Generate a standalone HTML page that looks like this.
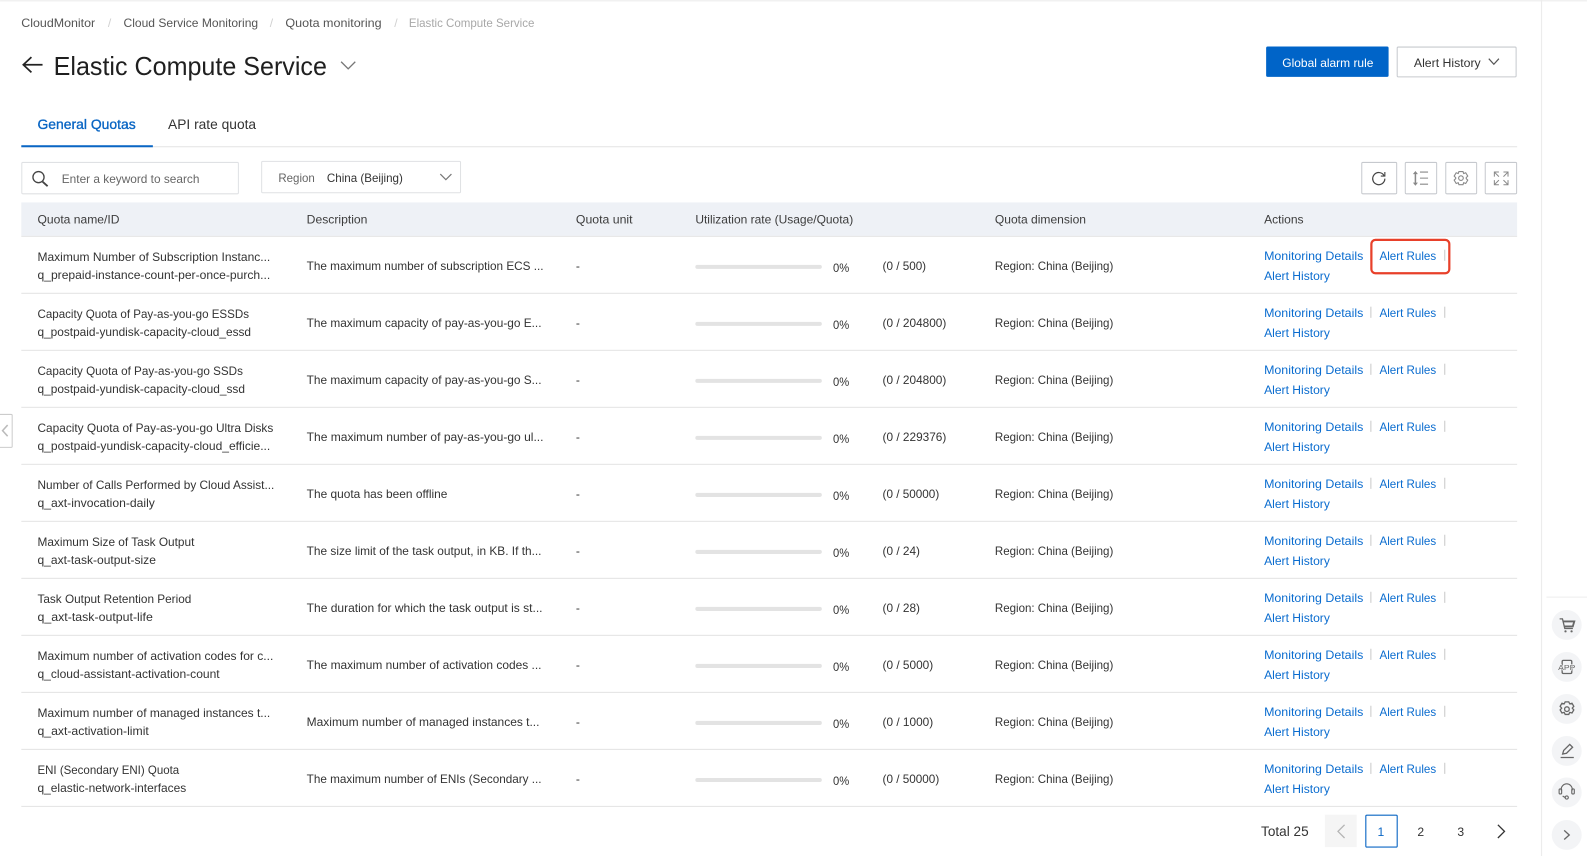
<!DOCTYPE html>
<html lang="en">
<head>
<meta charset="utf-8">
<title>Elastic Compute Service</title>
<style>
html,body{margin:0;padding:0;background:#fff;width:1587px;height:856px;overflow:hidden}
svg{display:block;position:absolute;left:0;top:0;filter:blur(.3px)}
text{font-family:"Liberation Sans",sans-serif;font-size:12px;fill:#333;white-space:pre}
.l{fill:#0a6ccf}
.b{fill:#555}
.h{fill:#3c3c3c}
.bar{fill:#e3e3e3}
.ln{fill:#e3e3e3}
.sep{fill:#c9c9c9}
.ic{fill:none;stroke:#444;stroke-width:1.2}
.ig{fill:none;stroke:#888;stroke-width:1.1}
.si{fill:none;stroke:#666;stroke-width:1.3}
.cir{fill:#f3f4f6}
.box{fill:#fff;stroke:#c6c9ce;stroke-width:1}
</style>
</head>
<body>
<svg width="1587" height="856" viewBox="0 0 1568 845.8" xmlns="http://www.w3.org/2000/svg">
<rect x="0" y="0" width="1568" height="1.5" fill="#f1f1f1"/>
<rect x="1522.5" y="0" width="1.2" height="846" fill="#ececec"/>

<!-- breadcrumb -->
<text class="b" x="21" y="26.5" textLength="73" lengthAdjust="spacingAndGlyphs">CloudMonitor</text>
<text x="106.500" y="26.5" style="fill:#d0d0d0">/</text>
<text class="b" x="122" y="26.5" textLength="133" lengthAdjust="spacingAndGlyphs">Cloud Service Monitoring</text>
<text x="266.500" y="26.5" style="fill:#d0d0d0">/</text>
<text class="b" x="282" y="26.5" textLength="95" lengthAdjust="spacingAndGlyphs">Quota monitoring</text>
<text x="389.500" y="26.5" style="fill:#d0d0d0">/</text>
<text x="404" y="26.5" textLength="124" lengthAdjust="spacingAndGlyphs" style="fill:#a8a8a8">Elastic Compute Service</text>

<!-- title -->
<path d="M42 64H23M31 56.500l-8 7.500 8 7.500" fill="none" stroke="#222" stroke-width="1.700"/>
<text x="53" y="74" textLength="270" lengthAdjust="spacingAndGlyphs" style="font-size:26px;fill:#1f1f1f">Elastic Compute Service</text>
<path d="M337 61l7 7 7-7" fill="none" stroke="#777" stroke-width="1.300"/>

<!-- top buttons -->
<rect x="1251" y="46" width="121" height="30" rx="1.500" fill="#0064c8"/>
<text x="1267" y="66" textLength="90" lengthAdjust="spacingAndGlyphs" style="fill:#fff">Global alarm rule</text>
<rect class="box" x="1380.500" y="46.500" width="117.500" height="29.500" rx="1"/>
<text x="1397" y="66" textLength="66" lengthAdjust="spacingAndGlyphs">Alert History</text>
<path d="M1471 58l5 5.500 5-5.500" fill="none" stroke="#555" stroke-width="1.200"/>

<!-- tabs -->
<text x="37" y="127.500" textLength="97" lengthAdjust="spacingAndGlyphs" style="font-size:14px;fill:#0a66c4;stroke:#0a66c4;stroke-width:.35px">General Quotas</text>
<text x="166" y="127.500" textLength="87" lengthAdjust="spacingAndGlyphs" style="font-size:14px">API rate quota</text>
<rect x="21" y="144.500" width="1478" height="1" fill="#e3e3e3"/>
<rect x="21" y="143.500" width="130" height="2" fill="#0a66c4"/>

<!-- search -->
<rect class="box" x="21.500" y="160.500" width="214" height="31" rx="1" style="stroke:#dfe1e4"/>
<circle cx="38" cy="175" r="5.500" fill="none" stroke="#444" stroke-width="1.300"/>
<path d="M42 179.500l5 4.500" stroke="#444" stroke-width="1.800" fill="none"/>
<text x="61" y="181" textLength="136" lengthAdjust="spacingAndGlyphs" style="fill:#666">Enter a keyword to search</text>
<rect class="box" x="258.500" y="159.500" width="196.500" height="31" rx="1" style="stroke:#dfe1e4"/>
<text x="275" y="180" textLength="36" lengthAdjust="spacingAndGlyphs" style="fill:#666">Region</text>
<text x="323" y="180" textLength="75" lengthAdjust="spacingAndGlyphs">China (Beijing)</text>
<path d="M435 172l5.500 5.500 5.500-5.500" fill="none" stroke="#777" stroke-width="1.200"/>

<!-- tool buttons -->
<rect class="box" x="1345.500" y="160.500" width="34.500" height="31" rx="1"/>
<path d="M1367.500 173.500a6 6 0 1 0 .8 3" class="ic" style="stroke-width:1.200"/>
<path d="M1368.300 170v4h-4" class="ic" style="stroke-width:1.100"/>
<rect class="box" x="1388.500" y="160.500" width="31" height="31" rx="1"/>
<path d="M1398.500 171v11" class="ig" style="stroke-width:1.500"/>
<path d="M1396 172l2.500-3 2.500 3zM1396 180.500l2.500 3 2.500-3z" fill="#888"/>
<path d="M1403 170h8M1403 176h8M1403 182h8" class="ig"/>
<rect class="box" x="1428.500" y="160.500" width="30.500" height="31" rx="1"/>
<path d="M1441.500 169.500h4l.7 2 2-.8 2 3.300-1.500 1.500v1l1.500 1.500-2 3.300-2-.8-.7 2h-4l-.7-2-2 .8-2-3.300 1.500-1.500v-1l-1.500-1.500 2-3.300 2 .8z" class="ig"/>
<circle cx="1443.500" cy="176" r="2.300" class="ig"/>
<rect class="box" x="1467.500" y="160.500" width="31" height="31" rx="1"/>
<path d="M1481 170h-4.500v4.500M1476.500 170l4.500 4.500M1485.500 170h4.500v4.500M1490 170l-4.500 4.500M1481 182.500h-4.500v-4.500M1476.500 182.500l4.500-4.500M1485.500 182.500h4.500v-4.500M1490 182.500l-4.500-4.500" class="ig" style="stroke:#888;stroke-width:1"/>

<!-- table head -->
<rect x="21" y="200" width="1478" height="33" fill="#eef1f6"/>
<text class="h" x="37" y="221" textLength="81" lengthAdjust="spacingAndGlyphs">Quota name/ID</text>
<text class="h" x="303" y="221" textLength="60" lengthAdjust="spacingAndGlyphs">Description</text>
<text class="h" x="569" y="221" textLength="56" lengthAdjust="spacingAndGlyphs">Quota unit</text>
<text class="h" x="687" y="221" textLength="156" lengthAdjust="spacingAndGlyphs">Utilization rate (Usage/Quota)</text>
<text class="h" x="983" y="221" textLength="90" lengthAdjust="spacingAndGlyphs">Quota dimension</text>
<text class="h" x="1249" y="221" textLength="39" lengthAdjust="spacingAndGlyphs">Actions</text>
<rect class="ln" x="21" y="233" width="1478" height="1"/>

<!-- row 1 -->
<g transform="translate(0,-0.300)">
<text x="37" y="258" textLength="230" lengthAdjust="spacingAndGlyphs">Maximum Number of Subscription Instanc...</text>
<text x="37" y="276" textLength="230" lengthAdjust="spacingAndGlyphs">q_prepaid-instance-count-per-once-purch...</text>
<text x="303" y="267" textLength="234" lengthAdjust="spacingAndGlyphs">The maximum number of subscription ECS ...</text>
<text x="569" y="267">-</text>
<rect class="bar" x="687" y="262" width="125" height="4" rx="2"/>
<text x="823" y="269" textLength="16" lengthAdjust="spacingAndGlyphs">0%</text>
<text x="872" y="267" textLength="43" lengthAdjust="spacingAndGlyphs">(0 / 500)</text>
<text x="983" y="267" textLength="117" lengthAdjust="spacingAndGlyphs">Region: China (Beijing)</text>
<text class="l" x="1249" y="257" textLength="98" lengthAdjust="spacingAndGlyphs">Monitoring Details</text>
<rect class="sep" x="1354" y="247" width="1" height="11"/>
<text class="l" x="1363" y="257" textLength="56" lengthAdjust="spacingAndGlyphs">Alert Rules</text>
<rect class="sep" x="1427" y="247" width="1" height="11"/>
<text class="l" x="1249" y="277" textLength="65" lengthAdjust="spacingAndGlyphs">Alert History</text>
<rect class="ln" x="21" y="289.600" width="1478" height="1"/>
</g>
<!-- row 2 -->
<g transform="translate(0,56.030)">
<text x="37" y="258" textLength="209" lengthAdjust="spacingAndGlyphs">Capacity Quota of Pay-as-you-go ESSDs</text>
<text x="37" y="276" textLength="211" lengthAdjust="spacingAndGlyphs">q_postpaid-yundisk-capacity-cloud_essd</text>
<text x="303" y="267" textLength="232" lengthAdjust="spacingAndGlyphs">The maximum capacity of pay-as-you-go E...</text>
<text x="569" y="267">-</text>
<rect class="bar" x="687" y="262" width="125" height="4" rx="2"/>
<text x="823" y="269" textLength="16" lengthAdjust="spacingAndGlyphs">0%</text>
<text x="872" y="267" textLength="63" lengthAdjust="spacingAndGlyphs">(0 / 204800)</text>
<text x="983" y="267" textLength="117" lengthAdjust="spacingAndGlyphs">Region: China (Beijing)</text>
<text class="l" x="1249" y="257" textLength="98" lengthAdjust="spacingAndGlyphs">Monitoring Details</text>
<rect class="sep" x="1354" y="247" width="1" height="11"/>
<text class="l" x="1363" y="257" textLength="56" lengthAdjust="spacingAndGlyphs">Alert Rules</text>
<rect class="sep" x="1427" y="247" width="1" height="11"/>
<text class="l" x="1249" y="277" textLength="65" lengthAdjust="spacingAndGlyphs">Alert History</text>
<rect class="ln" x="21" y="289.600" width="1478" height="1"/>
</g>
<!-- row 3 -->
<g transform="translate(0,112.360)">
<text x="37" y="258" textLength="203" lengthAdjust="spacingAndGlyphs">Capacity Quota of Pay-as-you-go SSDs</text>
<text x="37" y="276" textLength="205" lengthAdjust="spacingAndGlyphs">q_postpaid-yundisk-capacity-cloud_ssd</text>
<text x="303" y="267" textLength="232" lengthAdjust="spacingAndGlyphs">The maximum capacity of pay-as-you-go S...</text>
<text x="569" y="267">-</text>
<rect class="bar" x="687" y="262" width="125" height="4" rx="2"/>
<text x="823" y="269" textLength="16" lengthAdjust="spacingAndGlyphs">0%</text>
<text x="872" y="267" textLength="63" lengthAdjust="spacingAndGlyphs">(0 / 204800)</text>
<text x="983" y="267" textLength="117" lengthAdjust="spacingAndGlyphs">Region: China (Beijing)</text>
<text class="l" x="1249" y="257" textLength="98" lengthAdjust="spacingAndGlyphs">Monitoring Details</text>
<rect class="sep" x="1354" y="247" width="1" height="11"/>
<text class="l" x="1363" y="257" textLength="56" lengthAdjust="spacingAndGlyphs">Alert Rules</text>
<rect class="sep" x="1427" y="247" width="1" height="11"/>
<text class="l" x="1249" y="277" textLength="65" lengthAdjust="spacingAndGlyphs">Alert History</text>
<rect class="ln" x="21" y="289.600" width="1478" height="1"/>
</g>
<!-- row 4 -->
<g transform="translate(0,168.690)">
<text x="37" y="258" textLength="233" lengthAdjust="spacingAndGlyphs">Capacity Quota of Pay-as-you-go Ultra Disks</text>
<text x="37" y="276" textLength="230" lengthAdjust="spacingAndGlyphs">q_postpaid-yundisk-capacity-cloud_efficie...</text>
<text x="303" y="267" textLength="234" lengthAdjust="spacingAndGlyphs">The maximum number of pay-as-you-go ul...</text>
<text x="569" y="267">-</text>
<rect class="bar" x="687" y="262" width="125" height="4" rx="2"/>
<text x="823" y="269" textLength="16" lengthAdjust="spacingAndGlyphs">0%</text>
<text x="872" y="267" textLength="63" lengthAdjust="spacingAndGlyphs">(0 / 229376)</text>
<text x="983" y="267" textLength="117" lengthAdjust="spacingAndGlyphs">Region: China (Beijing)</text>
<text class="l" x="1249" y="257" textLength="98" lengthAdjust="spacingAndGlyphs">Monitoring Details</text>
<rect class="sep" x="1354" y="247" width="1" height="11"/>
<text class="l" x="1363" y="257" textLength="56" lengthAdjust="spacingAndGlyphs">Alert Rules</text>
<rect class="sep" x="1427" y="247" width="1" height="11"/>
<text class="l" x="1249" y="277" textLength="65" lengthAdjust="spacingAndGlyphs">Alert History</text>
<rect class="ln" x="21" y="289.600" width="1478" height="1"/>
</g>
<!-- row 5 -->
<g transform="translate(0,225.020)">
<text x="37" y="258" textLength="234" lengthAdjust="spacingAndGlyphs">Number of Calls Performed by Cloud Assist...</text>
<text x="37" y="276" textLength="116" lengthAdjust="spacingAndGlyphs">q_axt-invocation-daily</text>
<text x="303" y="267" textLength="139" lengthAdjust="spacingAndGlyphs">The quota has been offline</text>
<text x="569" y="267">-</text>
<rect class="bar" x="687" y="262" width="125" height="4" rx="2"/>
<text x="823" y="269" textLength="16" lengthAdjust="spacingAndGlyphs">0%</text>
<text x="872" y="267" textLength="56" lengthAdjust="spacingAndGlyphs">(0 / 50000)</text>
<text x="983" y="267" textLength="117" lengthAdjust="spacingAndGlyphs">Region: China (Beijing)</text>
<text class="l" x="1249" y="257" textLength="98" lengthAdjust="spacingAndGlyphs">Monitoring Details</text>
<rect class="sep" x="1354" y="247" width="1" height="11"/>
<text class="l" x="1363" y="257" textLength="56" lengthAdjust="spacingAndGlyphs">Alert Rules</text>
<rect class="sep" x="1427" y="247" width="1" height="11"/>
<text class="l" x="1249" y="277" textLength="65" lengthAdjust="spacingAndGlyphs">Alert History</text>
<rect class="ln" x="21" y="289.600" width="1478" height="1"/>
</g>
<!-- row 6 -->
<g transform="translate(0,281.350)">
<text x="37" y="258" textLength="155" lengthAdjust="spacingAndGlyphs">Maximum Size of Task Output</text>
<text x="37" y="276" textLength="117" lengthAdjust="spacingAndGlyphs">q_axt-task-output-size</text>
<text x="303" y="267" textLength="232" lengthAdjust="spacingAndGlyphs">The size limit of the task output, in KB. If th...</text>
<text x="569" y="267">-</text>
<rect class="bar" x="687" y="262" width="125" height="4" rx="2"/>
<text x="823" y="269" textLength="16" lengthAdjust="spacingAndGlyphs">0%</text>
<text x="872" y="267" textLength="37" lengthAdjust="spacingAndGlyphs">(0 / 24)</text>
<text x="983" y="267" textLength="117" lengthAdjust="spacingAndGlyphs">Region: China (Beijing)</text>
<text class="l" x="1249" y="257" textLength="98" lengthAdjust="spacingAndGlyphs">Monitoring Details</text>
<rect class="sep" x="1354" y="247" width="1" height="11"/>
<text class="l" x="1363" y="257" textLength="56" lengthAdjust="spacingAndGlyphs">Alert Rules</text>
<rect class="sep" x="1427" y="247" width="1" height="11"/>
<text class="l" x="1249" y="277" textLength="65" lengthAdjust="spacingAndGlyphs">Alert History</text>
<rect class="ln" x="21" y="289.600" width="1478" height="1"/>
</g>
<!-- row 7 -->
<g transform="translate(0,337.680)">
<text x="37" y="258" textLength="152" lengthAdjust="spacingAndGlyphs">Task Output Retention Period</text>
<text x="37" y="276" textLength="114" lengthAdjust="spacingAndGlyphs">q_axt-task-output-life</text>
<text x="303" y="267" textLength="233" lengthAdjust="spacingAndGlyphs">The duration for which the task output is st...</text>
<text x="569" y="267">-</text>
<rect class="bar" x="687" y="262" width="125" height="4" rx="2"/>
<text x="823" y="269" textLength="16" lengthAdjust="spacingAndGlyphs">0%</text>
<text x="872" y="267" textLength="37" lengthAdjust="spacingAndGlyphs">(0 / 28)</text>
<text x="983" y="267" textLength="117" lengthAdjust="spacingAndGlyphs">Region: China (Beijing)</text>
<text class="l" x="1249" y="257" textLength="98" lengthAdjust="spacingAndGlyphs">Monitoring Details</text>
<rect class="sep" x="1354" y="247" width="1" height="11"/>
<text class="l" x="1363" y="257" textLength="56" lengthAdjust="spacingAndGlyphs">Alert Rules</text>
<rect class="sep" x="1427" y="247" width="1" height="11"/>
<text class="l" x="1249" y="277" textLength="65" lengthAdjust="spacingAndGlyphs">Alert History</text>
<rect class="ln" x="21" y="289.600" width="1478" height="1"/>
</g>
<!-- row 8 -->
<g transform="translate(0,394.010)">
<text x="37" y="258" textLength="233" lengthAdjust="spacingAndGlyphs">Maximum number of activation codes for c...</text>
<text x="37" y="276" textLength="180" lengthAdjust="spacingAndGlyphs">q_cloud-assistant-activation-count</text>
<text x="303" y="267" textLength="232" lengthAdjust="spacingAndGlyphs">The maximum number of activation codes ...</text>
<text x="569" y="267">-</text>
<rect class="bar" x="687" y="262" width="125" height="4" rx="2"/>
<text x="823" y="269" textLength="16" lengthAdjust="spacingAndGlyphs">0%</text>
<text x="872" y="267" textLength="50" lengthAdjust="spacingAndGlyphs">(0 / 5000)</text>
<text x="983" y="267" textLength="117" lengthAdjust="spacingAndGlyphs">Region: China (Beijing)</text>
<text class="l" x="1249" y="257" textLength="98" lengthAdjust="spacingAndGlyphs">Monitoring Details</text>
<rect class="sep" x="1354" y="247" width="1" height="11"/>
<text class="l" x="1363" y="257" textLength="56" lengthAdjust="spacingAndGlyphs">Alert Rules</text>
<rect class="sep" x="1427" y="247" width="1" height="11"/>
<text class="l" x="1249" y="277" textLength="65" lengthAdjust="spacingAndGlyphs">Alert History</text>
<rect class="ln" x="21" y="289.600" width="1478" height="1"/>
</g>
<!-- row 9 -->
<g transform="translate(0,450.340)">
<text x="37" y="258" textLength="230" lengthAdjust="spacingAndGlyphs">Maximum number of managed instances t...</text>
<text x="37" y="276" textLength="110" lengthAdjust="spacingAndGlyphs">q_axt-activation-limit</text>
<text x="303" y="267" textLength="230" lengthAdjust="spacingAndGlyphs">Maximum number of managed instances t...</text>
<text x="569" y="267">-</text>
<rect class="bar" x="687" y="262" width="125" height="4" rx="2"/>
<text x="823" y="269" textLength="16" lengthAdjust="spacingAndGlyphs">0%</text>
<text x="872" y="267" textLength="50" lengthAdjust="spacingAndGlyphs">(0 / 1000)</text>
<text x="983" y="267" textLength="117" lengthAdjust="spacingAndGlyphs">Region: China (Beijing)</text>
<text class="l" x="1249" y="257" textLength="98" lengthAdjust="spacingAndGlyphs">Monitoring Details</text>
<rect class="sep" x="1354" y="247" width="1" height="11"/>
<text class="l" x="1363" y="257" textLength="56" lengthAdjust="spacingAndGlyphs">Alert Rules</text>
<rect class="sep" x="1427" y="247" width="1" height="11"/>
<text class="l" x="1249" y="277" textLength="65" lengthAdjust="spacingAndGlyphs">Alert History</text>
<rect class="ln" x="21" y="289.600" width="1478" height="1"/>
</g>
<!-- row 10 -->
<g transform="translate(0,506.670)">
<text x="37" y="258" textLength="140" lengthAdjust="spacingAndGlyphs">ENI (Secondary ENI) Quota</text>
<text x="37" y="276" textLength="147" lengthAdjust="spacingAndGlyphs">q_elastic-network-interfaces</text>
<text x="303" y="267" textLength="232" lengthAdjust="spacingAndGlyphs">The maximum number of ENIs (Secondary ...</text>
<text x="569" y="267">-</text>
<rect class="bar" x="687" y="262" width="125" height="4" rx="2"/>
<text x="823" y="269" textLength="16" lengthAdjust="spacingAndGlyphs">0%</text>
<text x="872" y="267" textLength="56" lengthAdjust="spacingAndGlyphs">(0 / 50000)</text>
<text x="983" y="267" textLength="117" lengthAdjust="spacingAndGlyphs">Region: China (Beijing)</text>
<text class="l" x="1249" y="257" textLength="98" lengthAdjust="spacingAndGlyphs">Monitoring Details</text>
<rect class="sep" x="1354" y="247" width="1" height="11"/>
<text class="l" x="1363" y="257" textLength="56" lengthAdjust="spacingAndGlyphs">Alert Rules</text>
<rect class="sep" x="1427" y="247" width="1" height="11"/>
<text class="l" x="1249" y="277" textLength="65" lengthAdjust="spacingAndGlyphs">Alert History</text>
<rect class="ln" x="21" y="289.600" width="1478" height="1"/>
</g>

<!-- red highlight -->
<rect x="1355" y="237" width="77" height="33" rx="4" fill="none" stroke="#e8402a" stroke-width="2.200"/>

<!-- left handle -->
<rect x="-2" y="409.500" width="14" height="32.500" rx="1" fill="#fff" stroke="#ccc" stroke-width="1"/>
<path d="M7.500 420l-5 5.500 5 5.500" fill="none" stroke="#bbb" stroke-width="1.500"/>

<!-- pagination -->
<text x="1246" y="826" textLength="47" lengthAdjust="spacingAndGlyphs" style="font-size:14px">Total 25</text>
<rect x="1309" y="805" width="31.500" height="32" fill="#f5f5f5"/>
<path d="M1328.500 815l-6.500 6.500 6.500 6.500" fill="none" stroke="#b5b5b5" stroke-width="1.300"/>
<rect x="1349.500" y="805.500" width="31" height="31.500" rx="1" fill="#fff" stroke="#0a66c4" stroke-width="1.100"/>
<text x="1361" y="826" style="fill:#0a66c4">1</text>
<text x="1400.500" y="826">2</text>
<text x="1440" y="826">3</text>
<path d="M1480 815l6.500 6.500-6.500 6.500" fill="none" stroke="#333" stroke-width="1.300"/>

<!-- right rail -->
<rect x="1528" y="589.500" width="40" height="1" fill="#ececec"/>
<circle class="cir" cx="1548" cy="617.500" r="14.800"/>
<circle class="cir" cx="1548" cy="659" r="14.800"/>
<circle class="cir" cx="1548" cy="700.500" r="14.800"/>
<circle class="cir" cx="1548" cy="742" r="14.800"/>
<circle class="cir" cx="1548" cy="783" r="14.800"/>
<circle class="cir" cx="1548" cy="825" r="14.800"/>
<path class="si" d="M1541 611.500h2.800l2.300 9.500h8"/>
<path class="si" d="M1544.500 614h11l-1.500 5h-8.300" style="stroke-width:1.800"/>
<circle cx="1546.800" cy="623.800" r="1.100" fill="#666"/>
<circle cx="1552.800" cy="623.800" r="1.100" fill="#666"/>
<rect class="si" x="1543.500" y="652.500" width="9.500" height="13" rx="1.200"/>
<text x="1539.500" y="662" textLength="17" lengthAdjust="spacingAndGlyphs" style="font-size:7.500px;fill:#666;paint-order:stroke;stroke:#f3f4f6;stroke-width:1.200px">APP</text>
<path class="si" d="M1546.500 693.500h3.500l1 2 2.200-.6 1.800 3-1.500 1.800 1.500 1.800-1.800 3-2.200-.6-1 2h-3.500l-1-2-2.200.6-1.800-3 1.500-1.800-1.500-1.800 1.800-3 2.200.6z"/>
<circle class="si" cx="1548.200" cy="700.700" r="2.300"/>
<path class="si" d="M1544 745l1-3.500 6-6 2.800 2.800-6 6zM1542 748.500h13"/>
<path class="si" d="M1542.500 781v-1a5.500 5.500 0 0 1 11 0v1M1544 786.500c1.500 1 2 1.500 3 1.500" style="stroke-width:1.100"/>
<rect class="si" x="1540.500" y="779.500" width="2.500" height="5" rx="1" style="stroke-width:1.100"/>
<rect class="si" x="1553" y="779.500" width="2.500" height="5" rx="1" style="stroke-width:1.100"/>
<circle class="si" cx="1548" cy="788" r="1.600" style="stroke-width:1.100"/>
<path class="si" d="M1545.500 820.500l5 4.500-5 4.500"/>
</svg>
</body>
</html>
